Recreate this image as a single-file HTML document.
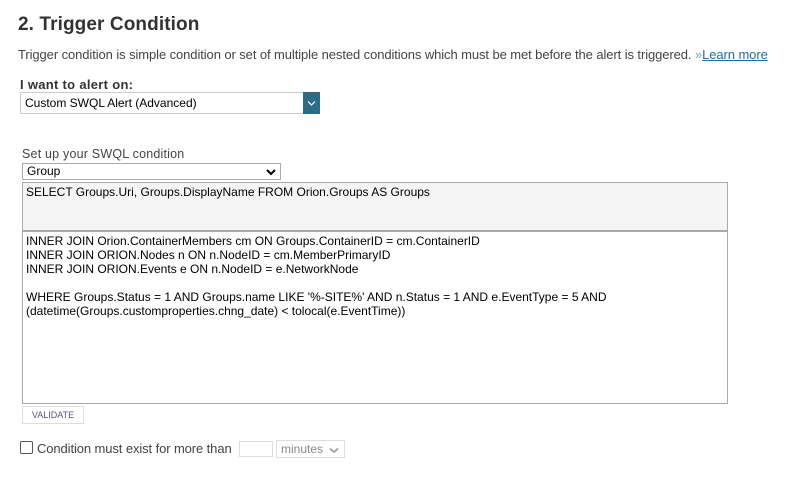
<!DOCTYPE html>
<html><head><meta charset="utf-8"><style>
*{box-sizing:border-box;margin:0;padding:0}
body{width:785px;height:478px;background:#fff;font-family:"Liberation Sans",Arial,sans-serif;color:#333;position:relative;overflow:hidden}
.abs{position:absolute;white-space:nowrap}
h2{position:absolute;left:18px;top:14px;font-size:19px;font-weight:bold;color:#333;letter-spacing:0.1px}
.desc{left:18px;top:47px;font-size:13px;letter-spacing:-0.09px;color:#444}
.desc a{color:#1c6fa0;text-decoration:underline}
.lbl{left:20px;top:77px;font-size:13px;font-weight:bold;color:#333;letter-spacing:0.3px}
.sel1{position:absolute;left:20px;top:92px;width:300px;height:22px;border:1px solid #ccc;font-size:12px;color:#000;padding:3px 4px}
.sel1 .btn{position:absolute;right:-1px;top:-1px;width:17px;height:22px;background:#2e6c85}
.lbl2{left:22px;top:147px;font-size:12.5px;color:#444;letter-spacing:0.2px}
.sel2{position:absolute;left:22px;top:163px;width:259px;height:17px;border:1px solid #aaa;font-size:12px;color:#000;padding:0 4px;line-height:15px}
.ta1{position:absolute;left:22px;top:182px;width:706px;height:49px;border:1px solid #aaa;background:#f5f5f5;font-size:12px;color:#000;padding:2px 3px}
.ta2{position:absolute;left:22px;top:230px;width:706px;height:174px;border:1px solid #aaa;border-top:2px solid #aaa;background:#fff;font-size:12px;color:#000;padding:2px 3px;line-height:14px;white-space:pre}
.val{position:absolute;left:22px;top:406px;width:62px;height:18px;border:1px solid #ddd;font-size:9px;color:#557;text-align:center;line-height:16px}
.cb{position:absolute;left:20px;top:441px;width:13px;height:13px;border:1px solid #555;border-radius:2px}
.ctext{left:37px;top:441px;font-size:13px;color:#444;letter-spacing:-0.1px}
.num{position:absolute;left:239px;top:441px;width:34px;height:16px;border:1px solid #ddd}
.min{position:absolute;left:276px;top:440px;width:69px;height:18px;border:1px solid #ddd;font-size:12px;color:#888;padding:1px 4px}
</style></head><body>
<h2>2. Trigger Condition</h2>
<div class="abs desc">Trigger condition is simple condition or set of multiple nested conditions which must be met before the alert is triggered. <span style="color:#7aa">»</span><a>Learn more</a></div>
<div class="abs lbl">I want to alert on:</div>
<div class="sel1">Custom SWQL Alert (Advanced)<div class="btn"><svg width="17" height="22" viewBox="0 0 17 22"><path d="M5 9.5l3.5 3.5 3.5-3.5" stroke="#fff" stroke-width="1.2" fill="none"/></svg></div></div>
<div class="abs lbl2">Set up your SWQL condition</div>
<div class="sel2">Group<svg style="position:absolute;right:4px;top:4px" width="10" height="8" viewBox="0 0 10 8"><path d="M1 2l4 4 4-4" stroke="#000" stroke-width="2" fill="none"/></svg></div>
<div class="ta1">SELECT Groups.Uri, Groups.DisplayName FROM Orion.Groups AS Groups</div>
<div class="ta2">INNER JOIN Orion.ContainerMembers cm ON Groups.ContainerID = cm.ContainerID
INNER JOIN ORION.Nodes n ON n.NodeID = cm.MemberPrimaryID
INNER JOIN ORION.Events e ON n.NodeID = e.NetworkNode

WHERE Groups.Status = 1 AND Groups.name LIKE '%-SITE%' AND n.Status = 1 AND e.EventType = 5 AND
(datetime(Groups.customproperties.chng_date) &lt; tolocal(e.EventTime))</div>
<div class="val">VALIDATE</div>
<div class="cb"></div>
<div class="abs ctext">Condition must exist for more than</div>
<div class="num"></div>
<div class="min">minutes<svg style="position:absolute;right:5px;top:6px" width="10" height="7" viewBox="0 0 10 7"><path d="M1 1.5l4 3.5 4-3.5" stroke="#999" stroke-width="1.6" fill="none"/></svg></div>
</body></html>
